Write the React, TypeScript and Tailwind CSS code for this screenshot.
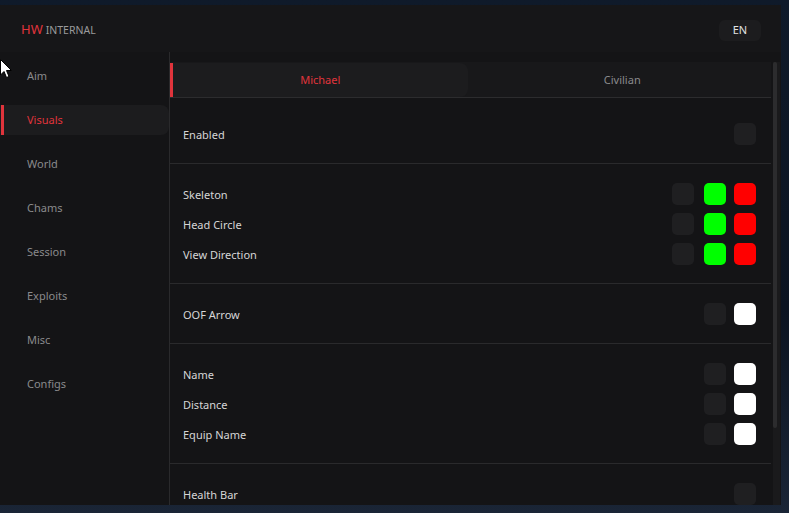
import React from 'react'

const font = { fontFamily: '"Noto Sans", "Open Sans", sans-serif' }

const navItems = ['Aim', 'Visuals', 'World', 'Chams', 'Session', 'Exploits', 'Misc', 'Configs']

type Swatch = 'off' | 'green' | 'red' | 'white'

const swatchClass: Record<Swatch, string> = {
  off: 'bg-[#1f1f21]',
  green: 'bg-[#00ff00]',
  red: 'bg-[#ff0000]',
  white: 'bg-white',
}

const sections: { label: string; swatches: Swatch[] }[][] = [
  [{ label: 'Enabled', swatches: ['off'] }],
  [
    { label: 'Skeleton', swatches: ['off', 'green', 'red'] },
    { label: 'Head Circle', swatches: ['off', 'green', 'red'] },
    { label: 'View Direction', swatches: ['off', 'green', 'red'] },
  ],
  [{ label: 'OOF Arrow', swatches: ['off', 'white'] }],
  [
    { label: 'Name', swatches: ['off', 'white'] },
    { label: 'Distance', swatches: ['off', 'white'] },
    { label: 'Equip Name', swatches: ['off', 'white'] },
  ],
  [{ label: 'Health Bar', swatches: ['off'] }],
]

function Row({ label, swatches }: { label: string; swatches: Swatch[] }) {
  return (
    <div className="flex h-[22px] items-center justify-between">
      <span className="pt-[2px] text-[11px] text-[#d6d6d6]">{label}</span>
      <div className="flex gap-2">
        {swatches.map((s, i) => (
          <div key={i} className={`size-[22px] rounded-[5px] ${swatchClass[s]} ${s === 'off' && swatches.length === 3 ? 'mr-[2px]' : ''}`} />
        ))}
      </div>
    </div>
  )
}

function Cursor() {
  return (
    <svg className="absolute left-0 top-[59px]" width="13" height="20" viewBox="0 0 13 20">
      <path d="M0.5 0.5 L0.5 16 L4 12.5 L6.5 18.5 L9 17.5 L6.5 11.5 L11.5 11.5 Z" fill="#fff" stroke="#000" strokeWidth="1" />
    </svg>
  )
}

export default function App() {
  return (
    <div className="relative h-screen w-full overflow-hidden bg-[linear-gradient(180deg,#0f1a2a_0%,#0b1320_60%,#1a2536_100%)] pt-[5px]" style={font}>
      <div className="flex h-[500px] w-[781px] flex-col bg-[#141416]">
        <header className="flex h-[47px] shrink-0 items-center justify-between bg-[#161618] pl-[21px] pr-[20px] pt-[3px]">
          <div className="flex items-baseline">
            <span className="text-[13px] text-[#e0343c]">HW</span>
            <span className="ml-[3px] text-[10.5px] text-[#9a9a9c]">INTERNAL</span>
          </div>
          <div className="flex h-[21px] w-[42px] items-center justify-center rounded-md bg-[#1c1c1e] text-[11px] text-[#e2e2e2]">
            EN
          </div>
        </header>

        <div className="flex min-h-0 flex-1">
          <nav className="flex w-[169px] shrink-0 flex-col gap-[14px] pt-[9px]">
            {navItems.map((item) => {
              const active = item === 'Visuals'
              return (
                <div
                  key={item}
                  className={`flex h-[30px] items-center rounded-r-lg pl-[27px] text-[11px] ${
                    active ? 'relative bg-[#1c1c1e] text-[#e0343c]' : 'text-[#8a8a8c]'
                  }`}
                >
                  {active && <span className="absolute left-[1px] top-0 h-full w-[3px] bg-[#e0343c]" />}
                  {item}
                </div>
              )
            })}
          </nav>

          <main className="flex min-w-0 flex-1 border-l border-[#2a2a2c] pt-[10px]">
            <div className="flex min-w-0 flex-1 flex-col overflow-hidden">
              <div className="flex h-[36px] shrink-0 border-b border-[#2c2c2e] bg-[#18181a] pt-px">
                <div className="flex flex-1 pr-[6px]">
                  <div className="flex flex-1 items-center justify-center rounded-r-lg border-l-[3px] border-[#e0343c] bg-[#1c1c1e] pt-px text-[11px] text-[#e0343c]">
                    Michael
                  </div>
                </div>
                <div className="flex flex-1 items-center justify-center pt-px text-[11px] text-[#8a8a8c]">Civilian</div>
              </div>
              <div className="pt-[6px]">
                {sections.map((rows, i) => (
                  <section key={i} className="flex flex-col gap-2 border-b border-[#2a2a2c] pb-[18px] pl-[13px] pr-[15px] pt-[19px]">
                    {rows.map((r) => (
                      <Row key={r.label} {...r} />
                    ))}
                  </section>
                ))}
              </div>
            </div>
            <div className="ml-[2px] mr-[1px] w-[7px] shrink-0 bg-[#1a1a1c]">
              <div className="h-[366px] w-[4px] rounded-sm bg-[#2c2c2e]" />
            </div>
          </main>
        </div>
      </div>
      <Cursor />
    </div>
  )
}
